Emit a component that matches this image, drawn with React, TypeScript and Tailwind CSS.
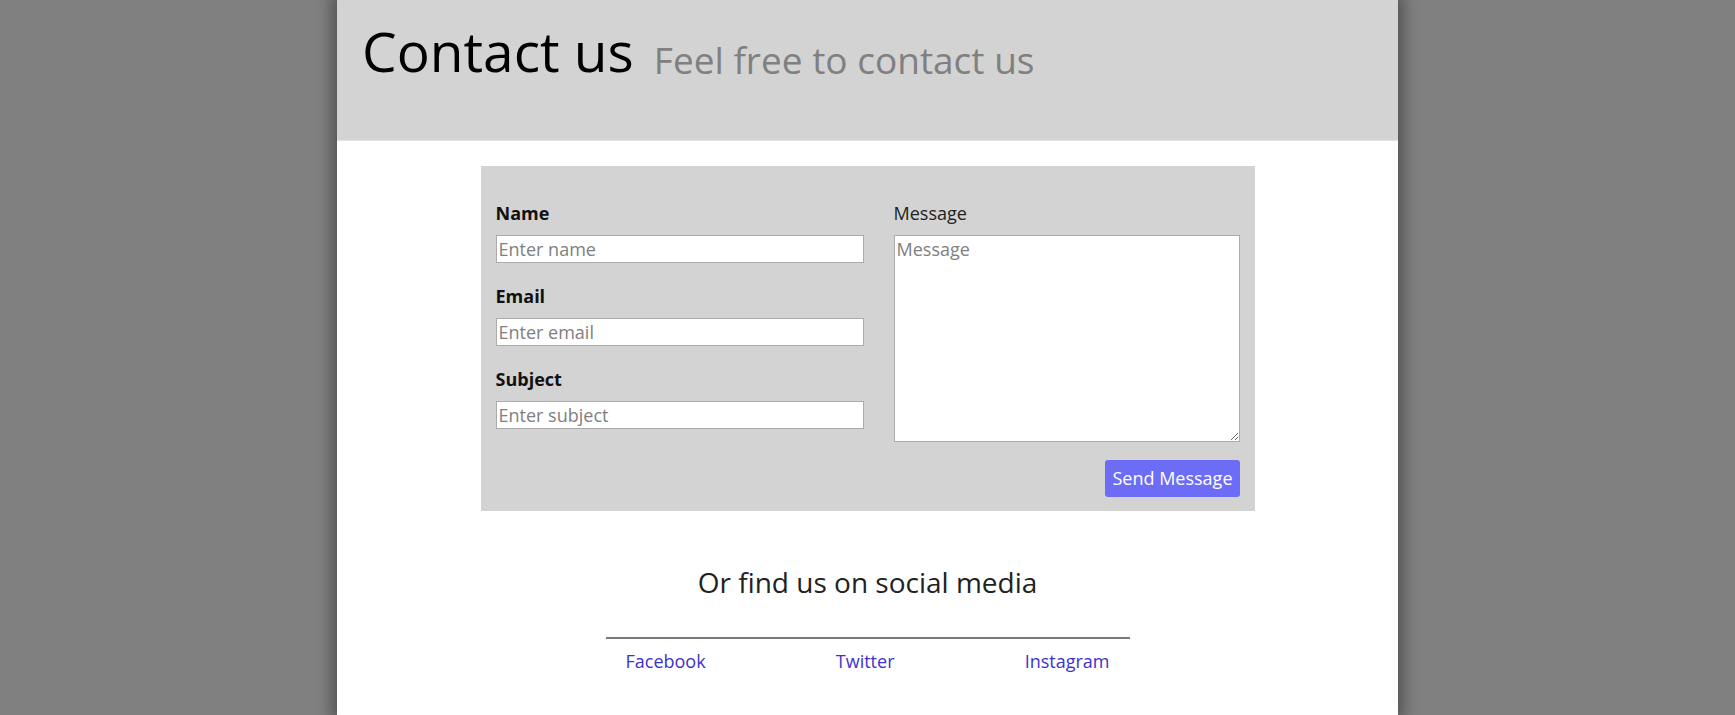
import { useState } from "react";

// Contact page – simple centered card on a gray backdrop
const font = "font-['Open_Sans','Noto_Sans',sans-serif]";

export default function App() {
  const [form, setForm] = useState({ name: "", email: "", subject: "", message: "" });

  const update = (key: keyof typeof form) => (e: React.ChangeEvent<HTMLInputElement | HTMLTextAreaElement>) =>
    setForm({ ...form, [key]: e.target.value });

  const fields: { key: "name" | "email" | "subject"; label: string; placeholder: string; type: string }[] = [
    { key: "name", label: "Name", placeholder: "Enter name", type: "text" },
    { key: "email", label: "Email", placeholder: "Enter email", type: "email" },
    { key: "subject", label: "Subject", placeholder: "Enter subject", type: "text" },
  ];

  return (
    <div className={`min-h-[715px] bg-[#808080] flex justify-center ${font}`}>
      <div className="w-[1061px] min-h-[715px] bg-white shadow-[0_0_14px_6px_rgba(0,0,0,0.35)]">
        {/* Header */}
        <header className="h-[141px] bg-[#d3d3d3] border-b border-[#e4e4e4] pl-[25px] pt-[16px] flex items-baseline gap-[20px]">
          <h1 className="text-[55px] leading-[70px] text-black">Contact us</h1>
          <span className="text-[37px] text-[#808080] relative top-[2px]">Feel free to contact us</span>
        </header>

        {/* Form */}
        <form
          className="mx-auto mt-[25px] w-[774px] bg-[#d3d3d3] px-[15px] pt-[35px] pb-[14px] grid grid-cols-[368px_346px] gap-x-[30px]"
          onSubmit={(e) => e.preventDefault()}
        >
          <div className="flex flex-col">
            {fields.map((f, i) => (
              <div key={f.key} className={i > 0 ? "mt-[21px]" : ""}>
                <label className="block text-[18px] leading-[24px] font-bold text-[#111] mb-[10px]">{f.label}</label>
                <input
                  type={f.type}
                  value={form[f.key]}
                  onChange={update(f.key)}
                  placeholder={f.placeholder}
                  className="block w-full h-[28px] bg-white border border-[#ababab] px-[2px] text-[18px] text-[#222] placeholder:text-[#808080] outline-none"
                />
              </div>
            ))}
          </div>

          <div className="flex flex-col">
            <label className="block text-[18px] leading-[24px] text-[#222] mb-[10px]">Message</label>
            <textarea
              value={form.message}
              onChange={update("message")}
              placeholder="Message"
              className="block w-full h-[207px] bg-white border border-[#ababab] px-[2px] py-[1px] text-[18px] leading-[24px] text-[#222] placeholder:text-[#808080] outline-none resize"
            />
            <div className="flex justify-end mt-[18px]">
              <button
                type="submit"
                className="h-[37px] px-[7px] rounded-[3px] bg-[#6c6cf6] text-white text-[18px]"
              >
                Send Message
              </button>
            </div>
          </div>
        </form>

        {/* Social */}
        <h2 className="mt-[54px] text-center text-[28px] leading-[34px] text-[#222]">Or find us on social media</h2>
        <div className="mx-auto mt-[38px] w-[524px] border-t-2 border-[#7a7a7a]" />
        <div className="mx-auto mt-[10px] w-[524px] px-[20px] flex justify-between text-[18px] leading-[24px]">
          <a href="#" className="text-[#3d33cc]">Facebook</a>
          <a href="#" className="text-[#3d33cc]">Twitter</a>
          <a href="#" className="text-[#3d33cc]">Instagram</a>
        </div>
      </div>
    </div>
  );
}
